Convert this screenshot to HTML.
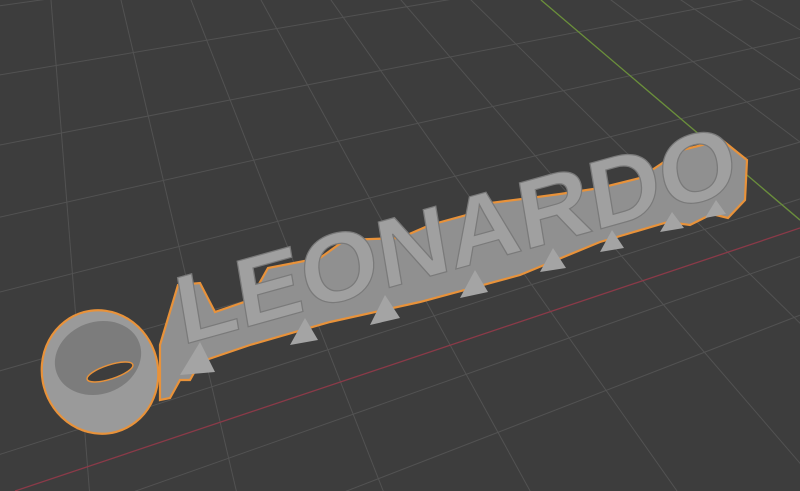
<!DOCTYPE html>
<html><head><meta charset="utf-8"><style>
html,body{margin:0;padding:0;background:#3d3d3d;overflow:hidden;width:800px;height:491px}
svg{display:block;overflow:hidden}
</style></head><body>
<svg id="s" width="800" height="491" viewBox="0 0 800 491" xmlns="http://www.w3.org/2000/svg">
<rect width="800" height="491" fill="#3d3d3d"/>
<g id="grid" stroke="#525252" stroke-width="1"></g>
<line x1="541" y1="0" x2="800" y2="220" stroke="#6a8f3a" stroke-width="1.3"/>
<line x1="15" y1="491" x2="800" y2="228" stroke="#8a3a48" stroke-width="1.3"/>
<!-- body silhouette -->
<path d="M160,345 L178,285 L200,283 L215,312 L250,300 L268,268 L320,258 L345,240 L400,238 L430,225 L470,214 L482,204 L530,198 L560,194 L600,188 L640,178 L682,150 L722,140 L747,160 L745,200 L728,218 L712,214 L690,225 L668,222 L600,242 L520,275 L420,302 L330,322 L250,345 L200,362 L190,380 L180,380 L170,398 L160,400 Z" fill="#909090" stroke="#e8923a" stroke-width="2.2"/>
<g fill="#a4a4a4">
<polygon points="180,375 200,342 215,372"/>
<polygon points="290,345 305,318 318,340"/>
<polygon points="370,325 385,295 400,318"/>
<polygon points="460,298 475,270 488,292"/>
<polygon points="540,272 553,248 566,268"/>
<polygon points="600,252 612,230 624,248"/>
<polygon points="660,232 672,212 684,228"/>
<polygon points="705,218 716,200 726,214"/>
</g>
<text x="0" y="0" transform="translate(182,345) rotate(-15.5) skewX(-6)" font-family="Liberation Sans, sans-serif" font-weight="bold" font-size="96" textLength="580" lengthAdjust="spacingAndGlyphs" fill="#a0a0a0" stroke="#7a7a7a" stroke-width="1.2">LEONARDO</text>
<!-- torus -->
<ellipse cx="100" cy="372" rx="58" ry="62" transform="rotate(-15 100 372)" fill="#9a9a9a" stroke="#e8923a" stroke-width="2.2"/>
<ellipse cx="98" cy="358" rx="44" ry="36" transform="rotate(-20 98 358)" fill="#7c7c7c"/>
<ellipse cx="110" cy="372" rx="24" ry="7" transform="rotate(-18 110 372)" fill="#3d3d3d" stroke="#e8923a" stroke-width="1.5"/>
</svg>
<script>
var g=document.getElementById('grid'),ns='http://www.w3.org/2000/svg';
function L(x1,y1,x2,y2){var l=document.createElementNS(ns,'line');l.setAttribute('x1',x1);l.setAttribute('y1',y1);l.setAttribute('x2',x2);l.setAttribute('y2',y2);g.appendChild(l);}
var vx=16,vy=-447;
for(var k=-12;k<=12;k++){var x0=541-k*70;var dx=x0-vx,dy=0-vy;var t=(600-vy)/dy;L(vx,vy,vx+dx*t,600);}
var ux=2500,uy=-344;
var ys=[-260,-190,-120,-50,20,92,165,240,318,400,487,575,665];
for(var i=0;i<ys.length;i++){L(ux,uy,-50,ys[i]+(ys[i]-uy)*(-50)/(ux));}
</script>
</body></html>
